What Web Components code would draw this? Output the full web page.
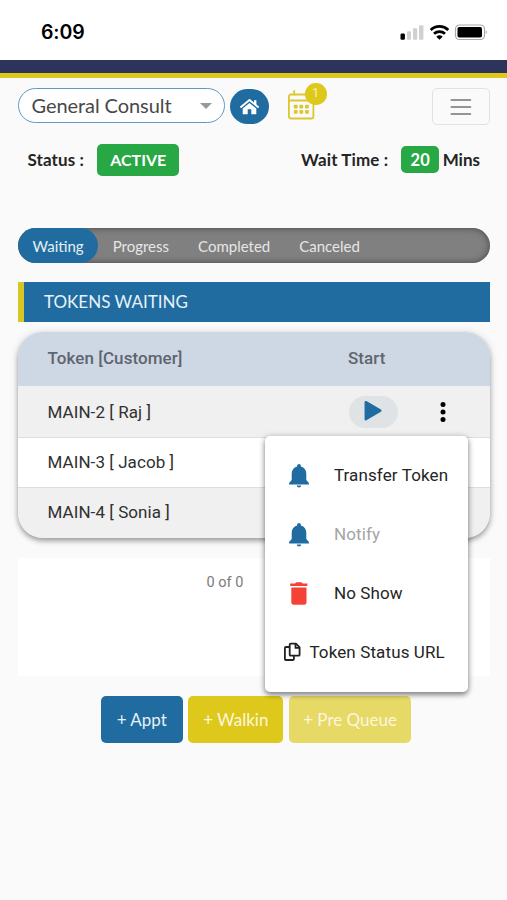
<!DOCTYPE html>
<html lang="en">
<head>
<meta charset="utf-8">
<title>Tokens Waiting</title>
<style>
html,body{margin:0;height:100%;background:#fafafa}
body{overflow:hidden;--blue:#206ca0;--gold:#ddc81b;--green:#28a745}
</style>
</head>
<body>
<queue-app></queue-app>
<script>
function define(name, html){
  const t=document.createElement('template');
  t.innerHTML=html;
  customElements.define(name, class extends HTMLElement{
    constructor(){super();this.attachShadow({mode:'open'}).appendChild(t.content.cloneNode(true));}
  });
}

define('phone-status',`<style>
:host{display:flex;height:60px;box-sizing:border-box;background:#fff;padding:0 19.500px 0 41px;justify-content:space-between;align-items:center;font:600 19.500px Inter,"Liberation Sans",sans-serif;color:#000}
span{letter-spacing:-.1px;padding-top:3px}
svg{display:block;margin-top:1px}
</style>
<span>6:09</span>
<svg width="88" height="20" viewBox="0 0 88 20">
<rect x=".5" y="12.500" width="4.400" height="6.300" rx="1.200"/>
<g fill="#d0d0d0"><rect x="7" y="10.200" width="4" height="8.600" rx="1"/><rect x="13" y="7.200" width="4.200" height="11.600" rx="1"/><rect x="19" y="4.200" width="4.400" height="14.600" rx="1"/></g>
<g fill="none" stroke="#000" stroke-width="2.800"><path d="M30.700 8.900a12.800 12.800 0 0 1 17.600 0"/><path d="M34 12.700a8.200 8.200 0 0 1 11 0"/></g>
<path d="M36.300 15.700a4.700 4.700 0 0 1 6.400 0L39.500 18.800z"/>
<rect x="55.500" y="4" width="29" height="14.500" rx="4" fill="#fff" stroke="#aaa" stroke-width="1.200"/>
<rect x="57.500" y="6" width="24.500" height="10.500" rx="1.800"/>
<path d="M85.800 9.300q2.200 1.900 0 3.900z" fill="#aaa"/>
</svg>`);

define('brand-stripe',`<style>:host{display:block;height:13px;background:#2d335b;border-bottom:5px solid var(--gold)}</style>`);

define('service-select',`<style>
:host{display:flex;box-sizing:border-box;width:207px;height:35px;border:1.500px solid #6199c0;border-radius:18px;background:#fff;align-items:center;justify-content:space-between;padding:0 12px 1px 12.500px;font:20px Lato,sans-serif;color:#484848;letter-spacing:-.07px}
i{border:6px solid transparent;border-top:6.500px solid #999;border-bottom:0;margin-top:2px}
</style><span><slot></slot></span><i></i>`);

define('home-button',`<style>
:host{display:flex;width:39px;height:35px;border-radius:18px;background:var(--blue);align-items:center;justify-content:center;margin:1px 0 0 5px}
</style><svg width="21" height="18" viewBox="0 0 21 18" fill="#fff"><path d="M10.500 4.900 17.300 10.600V16.300H12.300V11.300H8.700V16.300H3.700V10.600z"/><path d="M1.400 9.500 10.500 2 19.600 9.500" fill="none" stroke="#fff" stroke-width="1.900"/><path d="M15 2.300h2.400v5l-2.400-2z"/></svg>`);

define('calendar-badge',`<style>
:host{display:block;position:relative;width:40px;height:37px;margin-left:18px}
svg{display:block}
b{position:absolute;left:17.500px;top:-5px;width:22.500px;height:22px;border-radius:50%;background:var(--gold);color:#f6efb8;font:13px/20px Roboto,sans-serif;text-align:center}
</style><svg width="30" height="34" viewBox="0 0 30 34" fill="none" stroke="#dcc730" stroke-width="1.800">
<rect x="1.900" y="6.500" width="24.500" height="24" rx="2"/><path d="M2 12.500h24.500M7.200 2.300v5M21.400 2.300v5"/>
<g fill="#dcc730" stroke="none"><rect x="6.800" y="16.700" width="3.800" height="3.800" rx=".8"/><rect x="12.400" y="16.700" width="3.800" height="3.800" rx=".8"/><rect x="18" y="16.700" width="3.800" height="3.800" rx=".8"/><rect x="6.800" y="22" width="3.800" height="3.800" rx=".8"/><rect x="12.400" y="22" width="3.800" height="3.800" rx=".8"/><rect x="18" y="22" width="3.800" height="3.800" rx=".8"/></g></svg><b><slot></slot></b>`);

define('nav-toggle',`<style>
:host{display:flex;box-sizing:border-box;width:58px;height:37px;border:1.500px solid #e2e2e2;border-radius:5px;margin-left:auto;align-items:center;justify-content:center}
</style><svg width="22" height="18" viewBox="0 0 22 18" stroke="#949494" stroke-width="2" stroke-linecap="round"><path d="M1.500 2h18.800M1.500 9h18.800M1.500 16h18.800"/></svg>`);

define('tool-bar',`<style>:host{display:flex;align-items:flex-start;height:55.500px;padding:10px 17px 0 18px;box-sizing:border-box}</style><slot></slot>`);

define('status-pill',`<style>:host{display:flex;box-sizing:border-box;align-items:center;justify-content:center;background:var(--green);color:#fff;border-radius:5px;width:var(--w);height:var(--h)}</style><slot></slot>`);

define('status-line',`<style>
:host{display:flex;align-items:center;height:52px;box-sizing:border-box;padding:0 27px 0 27.500px;font:bold 17px Lato,sans-serif;color:#252525}
.a{--w:81.500px;--h:32px;margin-left:13.500px;font-size:16px}
.b{--w:38px;--h:27.500px;margin:0 3.500px 0 13px;font-size:16.500px}
.l,.r{letter-spacing:.1px}
.r{margin-left:auto}
</style><span class="l">Status :</span><status-pill class="a">ACTIVE</status-pill><span class="r">Wait Time :</span><status-pill class="b">20</status-pill><span>Mins</span>`);

define('tab-item',`<style>
:host{display:flex;align-items:center;height:35px;padding:0 14.500px;font:15px Lato,sans-serif;color:#e6e6e6}
:host([active]){background:var(--blue);color:#e6eff6;border-radius:18px}
</style><slot></slot>`);

define('tab-strip',`<style>
:host{display:flex;height:35px;margin:42.500px 17px 0 18px;background:#808080;border-radius:18px;box-shadow:inset 0 0 7px #444;overflow:hidden}
</style><slot></slot>`);

define('section-title',`<style>
:host{display:flex;align-items:center;height:39.500px;box-sizing:border-box;margin:19px 17px 0 18px;border-left:6px solid #d8c625;padding-left:20px;background:var(--blue);color:#e8f2f8;font:17px Lato,sans-serif}
</style><slot></slot>`);

define('token-table',`<style>
:host{display:block;margin:10px 17px 0 18px;border-radius:25px;overflow:hidden;background:#f0f0f0;box-shadow:0 3px 5px rgba(0,0,0,.3),0 1px 8px rgba(0,0,0,.15)}
header{display:flex;align-items:center;height:54px;background:#ced7e4;color:#5f656e;font:500 17px Roboto,sans-serif;letter-spacing:.07px;padding:0 0 2px 29.500px;box-sizing:border-box}
header span:first-child{width:300.500px}
</style><header><span>Token [Customer]</span><span>Start</span></header><slot></slot>`);

define('token-row',`<style>
:host{display:flex;align-items:center;box-sizing:border-box;height:50.500px;padding:0 0 1px 29.500px;font:17px Roboto,sans-serif;letter-spacing:.07px;color:#303030;background:#f0f0f0;border-top:1px solid #dedede}
:host([first]){border-top-color:#f0f0f0;height:51px;padding-bottom:0}
:host([plain]){background:#fff}
span{width:301.500px}
</style><span><slot></slot></span><slot name="actions"></slot>`);

define('row-actions',`<style>
:host{display:flex;align-items:center}
.p{display:flex;width:48.500px;height:32px;border-radius:16px;background:#dfe3e5}
.p svg{margin:3px 0 0 13.500px}
.d{margin:1px 0 0 40px}
</style><div class="p"><svg width="21" height="24" viewBox="0 0 21 24"><path d="M2.800 3.200v17L17.300 11.700z" fill="#206ca0" stroke="#206ca0" stroke-width="2.500" stroke-linejoin="round"/></svg></div>
<svg class="d" width="10" height="22" viewBox="0 0 10 22"><circle cx="5" cy="3.500" r="2.500"/><circle cx="5" cy="11" r="2.500"/><circle cx="5" cy="18.500" r="2.500"/></svg>`);

define('page-counter',`<style>
:host{display:block;height:118px;box-sizing:border-box;margin:20px 17px 0 18px;padding:15.500px 0 0 188.500px;background:#fff;font:14.500px/20px Roboto,sans-serif;color:#7b7b7b}
</style><slot></slot>`);

define('action-button',`<style>
:host{display:flex;align-items:center;justify-content:center;height:47px;border-radius:5px;background:var(--bg);width:var(--w);font:17px Lato,sans-serif;color:var(--fg)}
</style><slot></slot>`);

define('action-bar',`<style>
:host{display:flex;gap:5.500px;padding:20px 0 0 100.800px}
.a{--w:82px;--bg:var(--blue);--fg:#e6f1f8}.b{--w:95px;--bg:var(--gold);--fg:#fbf8df}.c{--w:122.500px;--bg:#e7d966;--fg:#fbf7db}
</style><action-button class="a">+ Appt</action-button><action-button class="b">+ Walkin</action-button><action-button class="c">+ Pre Queue</action-button>`);

define('menu-entry',`<style>
:host{display:flex;align-items:center;height:59px;font:17px Roboto,sans-serif;color:#252525;padding-left:22.500px;letter-spacing:.12px}
:host([disabled]){color:#a4a4a4}
:host([compact]){padding-left:18px}
div{width:46px;display:flex}
:host([compact]) div{width:26px}
</style><div><slot name="icon"></slot></div><slot></slot>`);

define('bell-icon',`<style>:host{display:block;margin-top:3px}svg{display:block}</style><svg width="22" height="26" viewBox="0 0 22 26" fill="#206ca0"><path d="M11 1c1.100 0 1.900.8 1.900 1.900v.7c3.600.9 5.400 3.700 5.400 7.200v6.300l2.600 2.900v1.500H1.100V20l2.600-2.900v-6.300c0-3.500 1.800-6.300 5.400-7.200v-.7C9.100 1.800 9.900 1 11 1zM8.800 22.600h4.400c0 1.300-1 2-2.200 2s-2.200-.7-2.200-2z"/></svg>`);
define('trash-icon',`<style>:host{display:block;margin-top:3px}svg{display:block}</style><svg width="22" height="26" viewBox="0 0 22 26" fill="#f44336"><path d="M3.300 6.500h15.200v15c0 1.200-1 2.200-2.200 2.200H5.500c-1.200 0-2.200-1-2.200-2.200z"/><path d="M2.200 2.500h4.800L8.200 1.200h5.300l1.200 1.300h4.700V5H2.200z"/></svg>`);
define('copy-icon',`<style>:host{display:block}svg{display:block}</style><svg width="19" height="20" viewBox="0 0 19 20" fill="none" stroke="#222" stroke-width="1.800" stroke-linejoin="round"><path d="M7.700 1.700h5.300l3.600 3.600v7.400q0 1-1 1H7.700q-1 0-1-1v-10q0-1 1-1z"/><path d="M12.500 1.900v4h4M6.700 5H2.900q-1 0-1 1v11q0 1 1 1h7q1 0 1-1v-3.300"/></svg>`);

define('row-menu',`<style>
:host{position:absolute;left:265.400px;top:436.400px;width:203px;height:255.500px;box-sizing:border-box;padding-top:9px;background:#fff;border-radius:5px;box-shadow:0 3px 5px rgba(0,0,0,.36),0 1px 7px rgba(0,0,0,.24)}
</style>
<menu-entry><bell-icon slot="icon"></bell-icon>Transfer Token</menu-entry>
<menu-entry disabled><bell-icon slot="icon"></bell-icon>Notify</menu-entry>
<menu-entry><trash-icon slot="icon"></trash-icon>No Show</menu-entry>
<menu-entry compact><copy-icon slot="icon"></copy-icon>Token Status URL</menu-entry>`);

define('queue-app',`<style>:host{display:block;position:relative;width:507px;height:900px;background:#fafafa;overflow:hidden}</style>
<phone-status></phone-status><brand-stripe></brand-stripe>
<tool-bar><service-select>General Consult</service-select><home-button></home-button><calendar-badge>1</calendar-badge><nav-toggle></nav-toggle></tool-bar>
<status-line></status-line>
<tab-strip><tab-item active>Waiting</tab-item><tab-item>Progress</tab-item><tab-item>Completed</tab-item><tab-item>Canceled</tab-item></tab-strip>
<section-title>TOKENS WAITING</section-title>
<token-table><token-row first>MAIN-2 [ Raj ]<row-actions slot="actions"></row-actions></token-row><token-row plain>MAIN-3 [ Jacob ]</token-row><token-row>MAIN-4 [ Sonia ]</token-row></token-table>
<page-counter>0 of 0</page-counter>
<action-bar></action-bar>
<row-menu></row-menu>`);
</script>
</body>
</html>
